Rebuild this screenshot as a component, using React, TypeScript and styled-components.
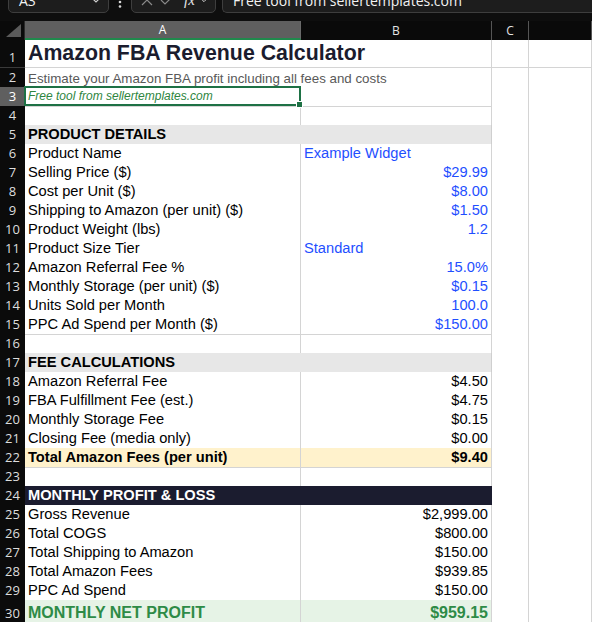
import React from 'react';
import styled, { createGlobalStyle, css } from 'styled-components';

const GlobalStyle = createGlobalStyle`
  html, body {
    margin: 0;
    padding: 0;
    background: #ffffff;
  }
  body {
    font-family: 'Liberation Sans', Arial, sans-serif;
    overflow: hidden;
  }
`;

const COLS = '25px 276px 191px 37px 1fr';
const GRID = '#d4d4d4';

// ---------- formula bar ----------

const TopBar = styled.div`
  height: 21px;
  background: #0e0e0e;
  display: flex;
  align-items: flex-start;
  overflow: hidden;
  padding-left: 8px;
  box-sizing: border-box;
`;

const BarBox = styled.div<{ $w?: number }>`
  margin-top: -13px;
  height: 26px;
  box-sizing: border-box;
  border: 1px solid #3e3e3e;
  border-radius: 5px;
  background: #1d1d1d;
  display: flex;
  align-items: center;
  color: #f2f2f2;
  font-family: 'Open Sans', 'Noto Sans', sans-serif;
  font-size: 14px;
  ${(p) =>
    p.$w
      ? css`
          width: ${p.$w}px;
          flex: none;
        `
      : css`
          flex: 1;
        `}
`;

const NameText = styled.span`
  padding-left: 10px;
  flex: 1;
`;

const Dots = styled.div`
  width: 22px;
  display: flex;
  justify-content: center;
  flex: none;
`;

const FxText = styled.span`
  font-family: 'Liberation Serif', serif;
  font-style: italic;
  font-size: 15px;
  color: #e6e6e6;
  margin: 0 4px 0 10px;
`;

const FormulaText = styled.span`
  padding-left: 10px;
  white-space: nowrap;
`;

const Chevron = ({ size = 12 }: { size?: number }) => (
  <svg width={size} height={size} viewBox="0 0 12 12" style={{ marginRight: 6 }}>
    <path d="M2 4 L6 8 L10 4" fill="none" stroke="#cfcfcf" strokeWidth="1.2" />
  </svg>
);

// ---------- sheet ----------

const HeaderRow = styled.div`
  display: grid;
  grid-template-columns: ${COLS};
  height: 19px;
  background: #0a0a0a;
`;

const Corner = styled.div`
  display: flex;
  align-items: flex-end;
  justify-content: flex-end;
  padding: 0 3px 3px 0;
  border-right: 1px solid #2a2a2a;
  box-sizing: border-box;
`;

const ColHead = styled.div<{ $sel?: boolean }>`
  display: flex;
  align-items: center;
  justify-content: center;
  font-family: 'Open Sans', 'Noto Sans', sans-serif;
  font-size: 12px;
  color: #e4e4e4;
  box-sizing: border-box;
  border-right: 1px solid #555555;
  ${(p) =>
    p.$sel &&
    css`
      background: #5f5f5f;
      color: #ffffff;
      border-bottom: 2px solid #1f8a4c;
      border-right-color: #6a6a6a;
    `}
`;

const Row = styled.div<{ $h: number }>`
  display: grid;
  grid-template-columns: ${COLS};
  height: ${(p) => p.$h}px;
`;

const RowHead = styled.div<{ $sel?: boolean }>`
  background: ${(p) => (p.$sel ? '#5f5f5f' : '#0b0b0b')};
  color: ${(p) => (p.$sel ? '#ffffff' : '#dedede')};
  font-family: 'Open Sans', 'Noto Sans', sans-serif;
  font-size: 13px;
  display: flex;
  align-items: flex-end;
  justify-content: center;
  padding-bottom: 1px;
  border-bottom: 1px solid #3a3a3a;
  box-sizing: border-box;
`;

type CellProps = {
  $span?: boolean;
  $bg?: string;
  $color?: string;
  $size?: number;
  $bold?: boolean;
  $italic?: boolean;
  $right?: boolean;
  $line?: string;
};

const Cell = styled.div<CellProps>`
  position: relative;
  grid-column: ${(p) => (p.$span ? 'span 2' : 'auto')};
  background: ${(p) => p.$bg || '#ffffff'};
  color: ${(p) => p.$color || '#000000'};
  font-size: ${(p) => p.$size || 14.67}px;
  font-weight: ${(p) => (p.$bold ? 700 : 400)};
  font-style: ${(p) => (p.$italic ? 'italic' : 'normal')};
  display: flex;
  align-items: flex-end;
  justify-content: ${(p) => (p.$right ? 'flex-end' : 'flex-start')};
  padding: 0 3px 1px 3px;
  box-sizing: border-box;
  border-right: 1px solid ${(p) => p.$line || GRID};
  border-bottom: 1px solid ${(p) => p.$line || GRID};
  white-space: nowrap;
  line-height: 1.15;
`;

const Blank = styled.div`
  background: #ffffff;
  border-right: 1px solid ${GRID};
  border-bottom: 1px solid ${GRID};
  box-sizing: border-box;
`;

const Selection = styled.div`
  position: absolute;
  left: -1px;
  top: -1px;
  width: 277px;
  height: 20px;
  border: 2px solid #1e7145;
  box-sizing: border-box;
  pointer-events: none;
`;

const Handle = styled.div`
  position: absolute;
  right: -4px;
  bottom: -4px;
  width: 5px;
  height: 5px;
  background: #1e7145;
  border: 1px solid #ffffff;
`;

type Kind =
  | 'title'
  | 'subtitle'
  | 'note'
  | 'blank'
  | 'section'
  | 'input'
  | 'calc'
  | 'total'
  | 'dark'
  | 'net';

type RowData = { n: number; kind: Kind; a?: string; b?: string; left?: boolean };

const BLUE = '#1f4fff';

const rows: RowData[] = [
  { n: 1, kind: 'title', a: 'Amazon FBA Revenue Calculator' },
  { n: 2, kind: 'subtitle', a: 'Estimate your Amazon FBA profit including all fees and costs' },
  { n: 3, kind: 'note', a: 'Free tool from sellertemplates.com' },
  { n: 4, kind: 'blank' },
  { n: 5, kind: 'section', a: 'PRODUCT DETAILS' },
  { n: 6, kind: 'input', a: 'Product Name', b: 'Example Widget', left: true },
  { n: 7, kind: 'input', a: 'Selling Price ($)', b: '$29.99' },
  { n: 8, kind: 'input', a: 'Cost per Unit ($)', b: '$8.00' },
  { n: 9, kind: 'input', a: 'Shipping to Amazon (per unit) ($)', b: '$1.50' },
  { n: 10, kind: 'input', a: 'Product Weight (lbs)', b: '1.2' },
  { n: 11, kind: 'input', a: 'Product Size Tier', b: 'Standard', left: true },
  { n: 12, kind: 'input', a: 'Amazon Referral Fee %', b: '15.0%' },
  { n: 13, kind: 'input', a: 'Monthly Storage (per unit) ($)', b: '$0.15' },
  { n: 14, kind: 'input', a: 'Units Sold per Month', b: '100.0' },
  { n: 15, kind: 'input', a: 'PPC Ad Spend per Month ($)', b: '$150.00' },
  { n: 16, kind: 'blank' },
  { n: 17, kind: 'section', a: 'FEE CALCULATIONS' },
  { n: 18, kind: 'calc', a: 'Amazon Referral Fee', b: '$4.50' },
  { n: 19, kind: 'calc', a: 'FBA Fulfillment Fee (est.)', b: '$4.75' },
  { n: 20, kind: 'calc', a: 'Monthly Storage Fee', b: '$0.15' },
  { n: 21, kind: 'calc', a: 'Closing Fee (media only)', b: '$0.00' },
  { n: 22, kind: 'total', a: 'Total Amazon Fees (per unit)', b: '$9.40' },
  { n: 23, kind: 'blank' },
  { n: 24, kind: 'dark', a: 'MONTHLY PROFIT & LOSS' },
  { n: 25, kind: 'calc', a: 'Gross Revenue', b: '$2,999.00' },
  { n: 26, kind: 'calc', a: 'Total COGS', b: '$800.00' },
  { n: 27, kind: 'calc', a: 'Total Shipping to Amazon', b: '$150.00' },
  { n: 28, kind: 'calc', a: 'Total Amazon Fees', b: '$939.85' },
  { n: 29, kind: 'calc', a: 'PPC Ad Spend', b: '$150.00' },
  { n: 30, kind: 'net', a: 'MONTHLY NET PROFIT', b: '$959.15' },
];

const heightOf = (k: Kind) => (k === 'title' ? 28 : k === 'net' ? 24 : 19);

const renderCells = (r: RowData) => {
  switch (r.kind) {
    case 'title':
      return (
        <Cell $span $size={21.33} $bold $color="#1b1c2e">
          {r.a}
        </Cell>
      );
    case 'subtitle':
      return (
        <Cell $span $size={13.33} $color="#595959">
          {r.a}
        </Cell>
      );
    case 'note':
      return (
        <Cell $span $size={12} $italic $color="#2e8540" style={{ paddingBottom: 2 }}>
          {r.a}
          <Selection>
            <Handle />
          </Selection>
        </Cell>
      );
    case 'blank':
      return (
        <>
          <Blank />
          <Blank />
        </>
      );
    case 'section':
      return (
        <Cell $span $bold $bg="#e7e7e7" $line="#cfcfcf">
          {r.a}
        </Cell>
      );
    case 'dark':
      return (
        <Cell $span $bold $bg="#1b1c2f" $color="#ffffff" $line="#1b1c2f">
          {r.a}
        </Cell>
      );
    case 'input':
      return (
        <>
          <Cell>{r.a}</Cell>
          <Cell $color={BLUE} $right={!r.left}>
            {r.b}
          </Cell>
        </>
      );
    case 'calc':
      return (
        <>
          <Cell>{r.a}</Cell>
          <Cell $right>{r.b}</Cell>
        </>
      );
    case 'total':
      return (
        <>
          <Cell $bold $bg="#fff2cc">
            {r.a}
          </Cell>
          <Cell $bold $bg="#fff2cc" $right>
            {r.b}
          </Cell>
        </>
      );
    case 'net':
      return (
        <>
          <Cell $bold $bg="#e6f3e6" $color="#2e8b47" $size={16}>
            {r.a}
          </Cell>
          <Cell $bold $bg="#e6f3e6" $color="#2e8b47" $size={16} $right>
            {r.b}
          </Cell>
        </>
      );
  }
};

const App = () => (
  <>
    <GlobalStyle />
    <TopBar>
      <BarBox $w={101}>
        <NameText>A3</NameText>
        <Chevron />
      </BarBox>
      <Dots>
        <svg width="4" height="12" viewBox="0 0 4 12">
          <circle cx="2" cy="2" r="1.3" fill="#d8d8d8" />
          <circle cx="2" cy="6.5" r="1.3" fill="#d8d8d8" />
        </svg>
      </Dots>
      <BarBox $w={85}>
        <svg width="14" height="14" viewBox="0 0 14 14" style={{ marginLeft: 8 }}>
          <path d="M2 2 L12 12 M12 2 L2 12" stroke="#8a8a8a" strokeWidth="1.2" />
        </svg>
        <svg width="14" height="14" viewBox="0 0 14 14" style={{ marginLeft: 6 }}>
          <path d="M1 7 L5 11 L13 3" fill="none" stroke="#8a8a8a" strokeWidth="1.2" />
        </svg>
        <FxText>fx</FxText>
        <Chevron size={10} />
      </BarBox>
      <BarBox style={{ marginLeft: 6, borderRight: 'none', borderRadius: '5px 0 0 5px' }}>
        <FormulaText>Free tool from sellertemplates.com</FormulaText>
      </BarBox>
    </TopBar>
    <HeaderRow>
      <Corner>
        <svg width="15" height="13" viewBox="0 0 15 13">
          <path d="M15 0 L15 13 L0 13 Z" fill="#5a5a5a" />
        </svg>
      </Corner>
      <ColHead $sel>A</ColHead>
      <ColHead>B</ColHead>
      <ColHead>C</ColHead>
      <ColHead />
    </HeaderRow>
    {rows.map((r) => (
      <Row key={r.n} $h={heightOf(r.kind)}>
        <RowHead $sel={r.n === 3}>{r.n}</RowHead>
        {renderCells(r)}
        <Blank />
        <Blank />
      </Row>
    ))}
  </>
);

export default App;
